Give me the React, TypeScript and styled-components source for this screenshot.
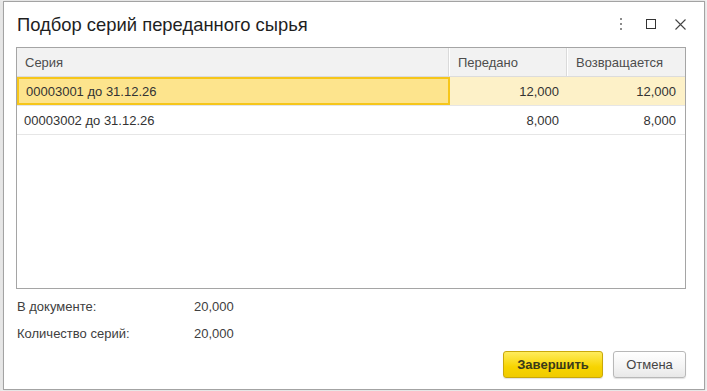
import React from 'react';
import styled, { createGlobalStyle } from 'styled-components';

const GlobalStyle = createGlobalStyle`
  html, body {
    margin: 0;
    padding: 0;
    background: #ececec;
    font-family: "Liberation Sans", Arial, sans-serif;
  }
`;

const Backdrop = styled.div`
  width: 707px;
  height: 391px;
  padding: 1px 2px 1px 3px;
  box-sizing: border-box;
  background: linear-gradient(90deg, #e6e6e6 0, #f4f4f4 3px, #f4f4f4 100%);
`;

const Dialog = styled.div`
  width: 702px;
  height: 389px;
  box-sizing: border-box;
  border: 1px solid #a3a3a3;
  background: #fff;
  display: flex;
  flex-direction: column;
  box-shadow: 0 0 3px rgba(0, 0, 0, 0.15);
`;

const TitleBar = styled.div`
  height: 44px;
  display: flex;
  align-items: center;
  padding: 0 14px 0 13px;
  flex-shrink: 0;
`;

const Title = styled.h1`
  margin: 0;
  flex: 1;
  font-size: 18.4px;
  font-weight: normal;
  color: #1f1f1f;
  padding-top: 1px;
`;

const TitleButtons = styled.div`
  display: flex;
  align-items: center;
  gap: 11px;
`;

const IconButton = styled.span`
  width: 19px;
  height: 19px;
  display: flex;
  align-items: center;
  justify-content: center;
`;

const Grid = styled.div`
  margin: 1px 18px 0 12px;
  height: 242px;
  box-sizing: border-box;
  border: 1px solid #a5a5a5;
  flex-shrink: 0;
  font-size: 13px;
  color: #333;
`;

const Row = styled.div<{ $head?: boolean }>`
  display: grid;
  grid-template-columns: 433px 118px 1fr;
  height: 29px;
  background: ${(p) => (p.$head ? '#f2f2f2' : '#fff')};
  border-bottom: 1px solid ${(p) => (p.$head ? '#dcdcdc' : '#e6e6e6')};
  box-sizing: border-box;
`;

const HeadCell = styled.div<{ $last?: boolean }>`
  display: flex;
  align-items: center;
  padding: 0 8px;
  color: #4d4d4d;
  border-right: ${(p) => (p.$last ? 'none' : '1px solid #fff')};
  box-shadow: ${(p) => (p.$last ? 'none' : 'inset -1px 0 0 #dadada')};
`;

const Cell = styled.div<{ $num?: boolean; $sel?: boolean; $current?: boolean }>`
  display: flex;
  align-items: center;
  justify-content: ${(p) => (p.$num ? 'flex-end' : 'flex-start')};
  padding: ${(p) => (p.$num ? '0 9px 0 7px' : '0 7px')};
  box-sizing: border-box;
  background: ${(p) => (p.$current ? '#fde48d' : p.$sel ? '#fdf1c8' : 'transparent')};
  border: ${(p) => (p.$current ? '2px solid #f6c61a' : 'none')};
`;

const Footer = styled.div`
  padding: 4px 0 0 13px;
  display: grid;
  grid-template-columns: 177px auto;
  font-size: 13px;
  color: #404040;
`;

const FooterItem = styled.div`
  height: 27px;
  display: flex;
  align-items: center;
`;

const Buttons = styled.div`
  margin-top: auto;
  padding: 0 18px 11px 0;
  display: flex;
  justify-content: flex-end;
  gap: 10px;
`;

const Button = styled.button<{ $primary?: boolean }>`
  height: 27px;
  padding: 0;
  width: ${(p) => (p.$primary ? '100px' : '73px')};
  border-radius: 3px;
  font-family: "Liberation Sans", Arial, sans-serif;
  font-size: 13px;
  font-weight: ${(p) => (p.$primary ? 'bold' : 'normal')};
  color: ${(p) => (p.$primary ? '#3a3a1a' : '#444')};
  border: 1px solid ${(p) => (p.$primary ? '#c9a80a' : '#b8b8b8')};
  background: ${(p) =>
    p.$primary
      ? 'linear-gradient(#ffec5c, #f7d400 60%, #f0cb00)'
      : 'linear-gradient(#ffffff, #f3f3f3 60%, #e8e8e8)'};
  box-shadow: 0 1px 1px rgba(0, 0, 0, 0.12);
`;

const rows = [
  { name: '00003001 до 31.12.26', sent: '12,000', back: '12,000' },
  { name: '00003002 до 31.12.26', sent: '8,000', back: '8,000' },
];

const App: React.FC = () => {
  return (
    <>
      <GlobalStyle />
      <Backdrop>
        <Dialog>
          <TitleBar>
            <Title>Подбор серий переданного сырья</Title>
            <TitleButtons>
              <IconButton>
                <svg width="4" height="12" viewBox="0 0 4 12">
                  <rect x="1" y="0" width="2" height="2" fill="#8c8c8c" />
                  <rect x="1" y="5" width="2" height="2" fill="#8c8c8c" />
                  <rect x="1" y="10" width="2" height="2" fill="#8c8c8c" />
                </svg>
              </IconButton>
              <IconButton>
                <svg width="10" height="10" viewBox="0 0 10 10">
                  <rect x="0.5" y="0.5" width="9" height="9" fill="none" stroke="#333" strokeWidth="1" />
                </svg>
              </IconButton>
              <IconButton>
                <svg width="11" height="11" viewBox="0 0 11 11">
                  <path d="M0.5 0.5 L10.5 10.5 M10.5 0.5 L0.5 10.5" stroke="#444" strokeWidth="1.1" />
                </svg>
              </IconButton>
            </TitleButtons>
          </TitleBar>

          <Grid>
            <Row $head>
              <HeadCell>Серия</HeadCell>
              <HeadCell>Передано</HeadCell>
              <HeadCell $last>Возвращается</HeadCell>
            </Row>
            {rows.map((r, i) => (
              <Row key={r.name}>
                <Cell $current={i === 0}>{r.name}</Cell>
                <Cell $num $sel={i === 0}>{r.sent}</Cell>
                <Cell $num $sel={i === 0}>{r.back}</Cell>
              </Row>
            ))}
          </Grid>

          <Footer>
            <FooterItem>В документе:</FooterItem>
            <FooterItem>20,000</FooterItem>
            <FooterItem>Количество серий:</FooterItem>
            <FooterItem>20,000</FooterItem>
          </Footer>

          <Buttons>
            <Button $primary>Завершить</Button>
            <Button>Отмена</Button>
          </Buttons>
        </Dialog>
      </Backdrop>
    </>
  );
};

export default App;
